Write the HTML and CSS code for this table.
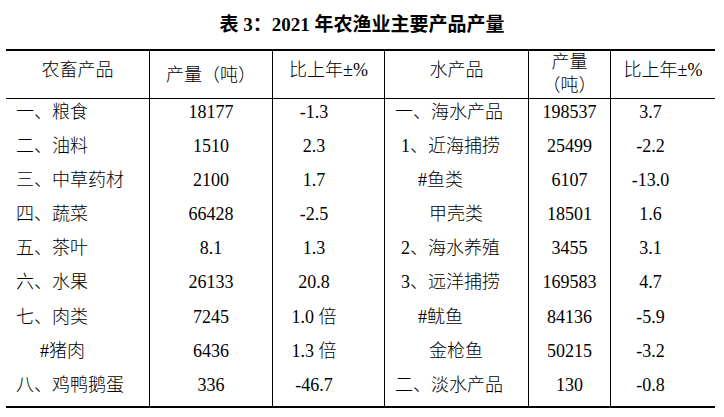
FILE: index.html
```html
<!DOCTYPE html>
<html lang="zh-CN">
<head>
<meta charset="utf-8">
<title>表 3：2021 年农渔业主要产品产量</title>
<link rel="stylesheet" href="styles.css">
</head>
<body>
<h1 class="title">表 3：2021 年农渔业主要产品产量</h1>
<div class="grid">
  <div class="h h1">农畜产品</div>
  <div class="h h2 ln">产量（吨）</div>
  <div class="h h3 ln">比上年±%</div>
  <div class="h h4 ln">水产品</div>
  <div class="h h5 ln">产量<br>（吨）</div>
  <div class="h h6 ln">比上年±%</div>

  <div class="d name">一、粮食</div>
  <div class="d num ln">18177</div>
  <div class="d pct ln">-1.3</div>
  <div class="d name2 ln i0">一、海水产品</div>
  <div class="d num ln">198537</div>
  <div class="d pct2 ln">3.7</div>

  <div class="d name">二、油料</div>
  <div class="d num ln">1510</div>
  <div class="d pct ln">2.3</div>
  <div class="d name2 ln i1">1、近海捕捞</div>
  <div class="d num ln">25499</div>
  <div class="d pct2 ln">-2.2</div>

  <div class="d name">三、中草药材</div>
  <div class="d num ln">2100</div>
  <div class="d pct ln">1.7</div>
  <div class="d name2 ln i2">#鱼类</div>
  <div class="d num ln">6107</div>
  <div class="d pct2 ln">-13.0</div>

  <div class="d name">四、蔬菜</div>
  <div class="d num ln">66428</div>
  <div class="d pct ln">-2.5</div>
  <div class="d name2 ln i3">甲壳类</div>
  <div class="d num ln">18501</div>
  <div class="d pct2 ln">1.6</div>

  <div class="d name">五、茶叶</div>
  <div class="d num ln">8.1</div>
  <div class="d pct ln">1.3</div>
  <div class="d name2 ln i1">2、海水养殖</div>
  <div class="d num ln">3455</div>
  <div class="d pct2 ln">3.1</div>

  <div class="d name">六、水果</div>
  <div class="d num ln">26133</div>
  <div class="d pct ln">20.8</div>
  <div class="d name2 ln i1">3、远洋捕捞</div>
  <div class="d num ln">169583</div>
  <div class="d pct2 ln">4.7</div>

  <div class="d name">七、肉类</div>
  <div class="d num ln">7245</div>
  <div class="d pct ln">1.0 倍</div>
  <div class="d name2 ln i2">#鱿鱼</div>
  <div class="d num ln">84136</div>
  <div class="d pct2 ln">-5.9</div>

  <div class="d name sub">#猪肉</div>
  <div class="d num ln">6436</div>
  <div class="d pct ln">1.3 倍</div>
  <div class="d name2 ln i3">金枪鱼</div>
  <div class="d num ln">50215</div>
  <div class="d pct2 ln">-3.2</div>

  <div class="d name">八、鸡鸭鹅蛋</div>
  <div class="d num ln">336</div>
  <div class="d pct ln">-46.7</div>
  <div class="d name2 ln i0">二、淡水产品</div>
  <div class="d num ln">130</div>
  <div class="d pct2 ln">-0.8</div>
</div>
</body>
</html>
```

FILE: styles.css
```css
html, body {
  margin: 0;
  padding: 0;
  background: #ffffff;
}

body {
  width: 724px;
  height: 417px;
  overflow: hidden;
  color: #000000;
  font-family: "Liberation Serif", "Noto Sans CJK SC", serif;
}

.title {
  margin: 0;
  height: 49px;
  line-height: 49px;
  font-size: 19px;
  font-weight: bold;
  text-align: center;
}

.grid {
  display: grid;
  grid-template-columns: 143px 123px 112px 144px 82px 105px;
  grid-template-rows: 48px repeat(9, 34.1px);
  width: 709px;
  margin-left: 6px;
  border-top: 2px solid #000;
  border-bottom: 2px solid #000;
  font-size: 18px;
  font-weight: 300;
}

.ln {
  border-left: 1px solid #000;
}

.h {
  box-sizing: border-box;
  border-bottom: 1px solid #000;
  text-align: center;
  line-height: 22px;
  padding-top: 8px;
}

.h2 {
  padding-top: 13px;
}

.h5 {
  padding-top: 0;
  line-height: 22.5px;
}

.d {
  line-height: 26px;
  padding-bottom: 8px;
  white-space: nowrap;
}

.name {
  padding-left: 10px;
}

.name.sub {
  padding-left: 34px;
}

.name2.i0 { padding-left: 10px; }
.name2.i1 { padding-left: 16px; }
.name2.i2 { padding-left: 33px; }
.name2.i3 { padding-left: 44px; }

.num {
  text-align: center;
}

.pct {
  text-align: center;
  padding-right: 29px;
}

.pct2 {
  text-align: center;
  padding-right: 25px;
}
```
